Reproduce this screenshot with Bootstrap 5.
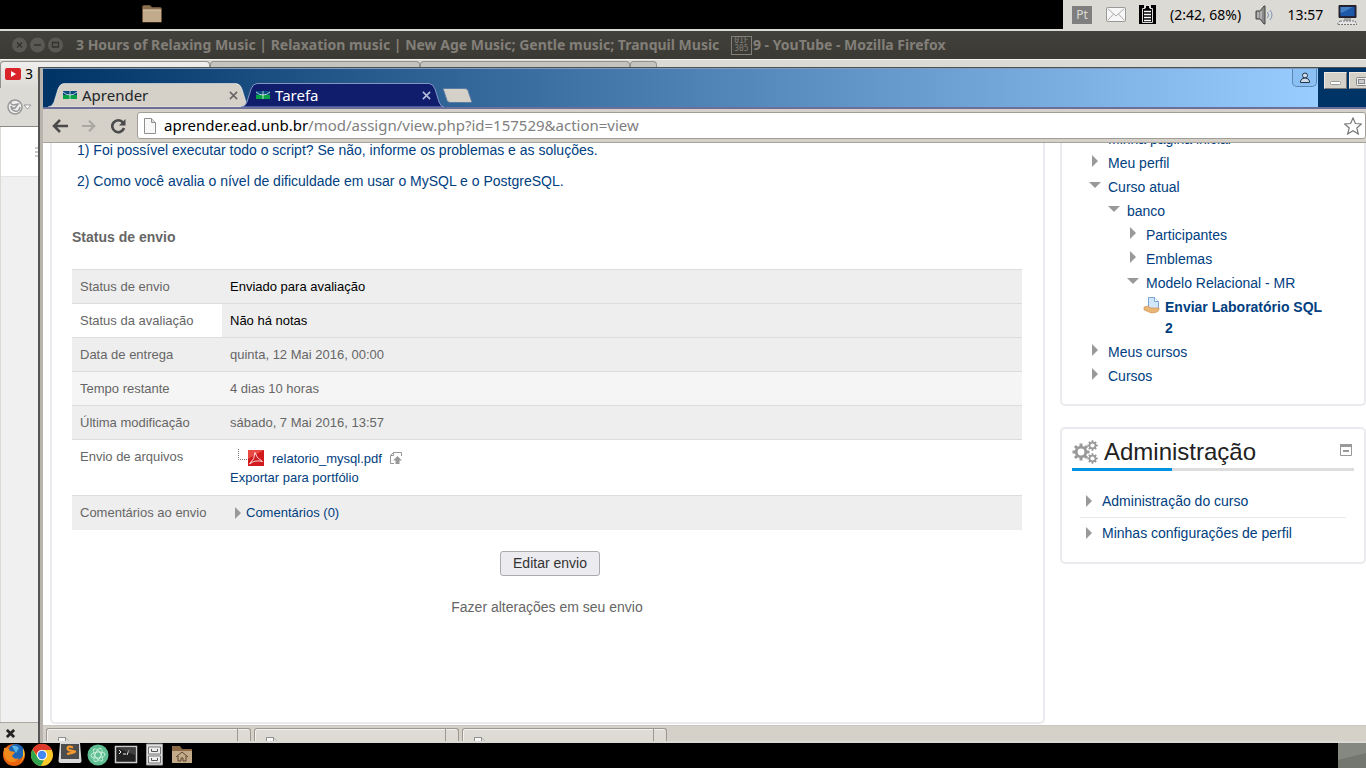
<!DOCTYPE html>
<html lang="pt-BR">
<head>
<meta charset="utf-8">
<meta name="viewport" content="width=device-width, initial-scale=1">
<title>Tarefa</title>
<link href="https://cdn.jsdelivr.net/npm/bootstrap@5.3.0/dist/css/bootstrap.min.css" rel="stylesheet">
<style>
:root{--ui:"Noto Sans","Open Sans",sans-serif;--web:"Liberation Sans",Arial,sans-serif;--edge:#eaeaef;--lnk:#004080}
body{font-family:var(--ui);font-size:14px;line-height:21px;color:#000;background:#000}
svg{display:block;flex:none}
a{text-decoration:none;color:var(--lnk)}
.desktop{height:100vh;overflow:hidden}
/* panel */
.panel-top{height:31px;border-bottom:2px solid #dcdad5}
.folder{margin-left:142px}
.tray{width:303px;background:#dcdad5;padding:0 9px;font-size:14px}
.kbd-lang{width:20px;height:18px;background:#7f7f7f;color:#dcdad5;font-size:12px}
/* firefox */
.ff-title{height:28px;background:linear-gradient(#42413c,#3a3934);color:#827f78;padding-left:12px}
.ff-title h1{font-size:14px;font-weight:700;line-height:28px;margin:0 0 0 13px;white-space:pre}
.codebox{flex:none;width:21px;height:19px;margin:0 1px 0 8px;border:1px solid #827f78;font:8px/8px "DejaVu Sans Mono",monospace;text-align:center;white-space:normal}
.work{background:#dcdad5}
.ff-tabs{height:29px;padding:1px 0 0 0;border-top:1px solid #f4f3f1}
.ff-tab{width:210px;border:1px solid #94928d;border-bottom:0;border-radius:4px 4px 0 0;background:#c6c4bf}
.ff-tab.on{background:linear-gradient(#f0efed,#dcdad5);padding:0 0 3px 4px;white-space:nowrap;overflow:hidden}
.ff-tab.end{width:27px}
.ff-nav{height:39px;padding-left:6px;border-bottom:1px solid #8b8984}
.ff-page{background:#f0f0f0;border-left:1px solid #dcdad5}
.ff-head{height:50px;background:#fff;border-bottom:1px solid #e4e4e4;width:38px}
.ff-find{height:21px;border-top:1px solid #a9a7a2;padding-left:6px}
/* chrome */
.chrome-win{inset:8px 0 0 38px;border-left:2px solid #555;background:#d5d0c8;border-top:1px solid #4c5156;z-index:2}
.chrome-in{border-left:3px solid #b8b4ad}
.c-strip{height:41px;background:#036;border-bottom:2px solid #6c6f9c}
.c-title{border-top:1px solid #7e9cba;background:linear-gradient(90deg,#036 0,#036 4px,#9cf 100%);padding-left:5px}
.c-tab{position:relative;z-index:1;width:203px;height:24px;margin-right:-10px;font-size:15px;line-height:24px;padding:0 13px 0 15px;gap:5px}
.c-tab .shape{position:absolute;inset:0;z-index:-1}
.c-tab button,.plain{border:0;background:none;padding:0;color:inherit}
.c-ctl{width:48px;padding:0 0 0 6px;gap:2px;overflow:hidden}
.c-ctl button{width:23px;height:17px;background:#d5d0c8;border:1px solid #eee9e0;border-right-color:#777;border-bottom-color:#777;padding:0}
.c-user{width:25px;height:18px;border:1px solid #5987b5;border-top:0;border-radius:0 0 5px 5px;background:#8bc0f5;padding:0;margin-right:1px}
.c-bar{height:34px;background:#d5d0c8;border-bottom:1px solid #a6a39d;padding-left:9px}
.c-bar button+button{margin-left:14px}
.omni{height:27px;background:#fff;border:1px solid #a19e98;border-radius:3px;padding:0 3px 0 6px;margin-left:11px}
.url{font-size:15px;color:#808080;white-space:nowrap;cursor:text}
.url span{color:#000}
.view{background:#fff;overflow:hidden;padding-left:7px;font-family:var(--web);gap:15px}
.main-box{border:2px solid var(--edge);border-top:0;border-radius:0 0 5px 5px;padding:0 21px 0 20px;color:#666;margin-bottom:1px}
.lead-lines{margin:-3px 0 0 5px}
.lead-lines p{color:var(--lnk);margin:0 0 10px}
.main-box h2{font-size:14px;line-height:21px;font-weight:700;margin:35px 0 21px}
.status{--bs-table-bg:transparent;font-size:13px;line-height:17px;color:#666;margin:0 0 21px}
.status>tbody>tr>*{padding:8px;border:0;border-top:1px solid #ddd;background:#eee;color:#666;font-weight:400}
.status th{width:150px}
.status .graded td{color:#000}
.status .ungraded th{background:#fff}
.status .pale>*{background:#f5f5f5}
.status .clear>*{background:#fff}
.status .files div{height:20px}
.status .files p{line-height:19px;margin:0}
.status .talk{line-height:18px}
.edit{width:100px;height:25px;font-size:14px;line-height:21px;color:#333;background:#ebebf0;border:1px solid #aaaaaf;border-radius:3px;padding:0;margin:0 0 21px 6px}
.side{width:306px;color:var(--lnk)}
.block{border:2px solid var(--edge);border-radius:5px}
.nav-block{border-top:0;border-radius:0 0 5px 5px;padding:0 32px 16px 28px}
.tree,.tree ul{list-style:none;margin:0;padding:0}
.tree{margin-top:-16px}
.tree ul{padding-left:19px}
.tree .node{gap:8px;padding:2px 0 1px}
.tree .ico{width:10px;flex:none;margin-top:1px}
.admin{margin-top:21px;padding:6px 10px 13px}
.admin .head{gap:6px}
.admin h2{font-size:24px;line-height:33px;font-weight:400;color:#222;margin:0}
.rule{height:3px;background:#ddd;margin-bottom:15px}
.rule i{display:block;height:3px;width:100px;background:#0094e0}
.admin ul{list-style:none;margin:0 8px 0 8px;padding:0}
.admin li{height:31px;padding:5px 0 0 5px;gap:9px}
.admin li svg{margin-top:3px}
.admin li+li{height:32px;border-top:1px solid #e8e8ea}
.dl{height:18px;border-top:1px solid #c9c6c0;border-bottom:2px solid #dcdad5;padding:2px 0 0 3px;gap:3px;overflow:hidden}
.dl-item{width:205px;border:1px solid #9b9892;border-bottom:0;border-radius:3px 3px 0 0;background:#dedbd5;box-shadow:inset 1px 1px #f3f1ed;padding-left:11px;height:24px}
.dl-item i{margin-left:auto;width:13px;border-left:1px solid #9b9892}
.dock{height:25px;gap:4px;padding-left:2px}
.dock svg{width:24px;height:24px}
.dock .wall{width:28px;height:25px}
</style>
</head>
<body>
<svg width="0" height="0" class="position-absolute">
 <defs>
  <symbol id="r" viewBox="0 0 10 14"><path d="M2 1l6 6-6 6z" fill="#999"/></symbol>
  <symbol id="d" viewBox="0 0 12 14"><path d="M0 4h12L6 10z" fill="#999"/></symbol>
  <symbol id="flag" viewBox="0 0 14 8"><path d="M0 0h14v4H0z" fill="#0b4a80"/><path d="M0 4h14v4H0z" fill="#08a045"/><path d="M0 1q3 3 7 3t7-3M7 0v8" fill="none" stroke="#fff" stroke-width=".7"/></symbol>
  <symbol id="x" viewBox="0 0 10 10"><path d="M1 1l8 8M9 1L1 9" stroke="currentColor" stroke-width="1.700"/></symbol>
  <symbol id="gear" viewBox="0 0 18 18"><path d="M9 .5v17M.5 9h17M3 3l12 12M15 3L3 15" stroke="#999" stroke-width="3"/><circle cx="9" cy="9" r="6.200" fill="#999"/><circle cx="9" cy="9" r="3.400" fill="#fff"/></symbol>
  <symbol id="page" viewBox="0 0 12 16"><path d="M.5.5h7l4 4v11H.5z" fill="#f8f8f8" stroke="#8f8f8f"/><path d="M7.500.5v4h4" fill="#ddd" stroke="#8f8f8f"/></symbol>
 </defs>
</svg>
<div class="desktop d-flex flex-column">
 <header class="panel-top d-flex justify-content-between flex-shrink-0">
  <svg class="folder" width="20" height="28" viewBox="0 0 20 28"><path d="M.5 7q0-1.500 1.500-1.500h6l2 2h8q1.500 0 1.500 1.500v13H.5z" fill="#8c6f4e" stroke="#6d5336"/><path d="M1 10h18v12H1z" fill="#c2ab8c"/><path d="M1 10h18" stroke="#e0d0b8"/></svg>
  <div class="tray d-flex align-items-center">
   <span class="kbd-lang d-flex align-items-center justify-content-center">Pt</span>
   <svg class="ms-auto" width="20" height="15" viewBox="0 0 20 15"><rect x=".5" y=".5" width="19" height="14" rx="1" fill="#f7f7f7" stroke="#999"/><path d="M1.500 1.500L10 9l8.500-7.500M1.500 13.500L7.500 7M18.500 13.500L12.500 7" fill="none" stroke="#aaa"/></svg>
   <svg class="ms-auto" width="17" height="19" viewBox="0 0 17 19"><path d="M0 0h17v19H0z"/><path d="M5 .5h1v3H3.500v14h10v-14H11v-3h1" fill="none" stroke="#dcdad5"/><path d="M5 0h7v3H5z" fill="#dcdad5"/><path d="M7 1h3v3H7z"/><path d="M5 6.500h7M5 9.500h7M5 12.500h7M5 15.500h7" stroke="#fff" stroke-width="1.600"/></svg>
   <span class="ms-auto">(2:42, 68%)</span>
   <svg class="ms-auto" width="19" height="20" viewBox="0 0 19 20"><path d="M1 6h4l4-5h1v18H9l-4-5H1z" fill="#888" stroke="#444"/><path d="M3 7v6M6 6v8" stroke="#ddd"/><path d="M12.500 7q2 3 0 6M15 5q4 5 0 10" fill="none" stroke="#7a94b8"/></svg>
   <span class="ms-auto">13:57</span>
   <svg class="ms-auto" width="20" height="20" viewBox="0 0 20 20"><path d="M2 .5h17v12H2z" fill="#224" stroke="#222"/><path d="M3.500 2h14v9h-14z" fill="#1c57a8"/><path d="M3.500 2h12l-9 5-3 1z" fill="#477fc4"/><path d="M7 13h7v3H7z" fill="#aaa"/><path d="M3 16h15l2 3.500H0z" fill="#e5e5e5" stroke="#777" stroke-dasharray="2 1"/></svg>
  </div>
 </header>
 <div class="ff-title d-flex align-items-center flex-shrink-0">
  <svg width="51" height="16" viewBox="0 0 51 16"><g fill="#5b5954"><circle cx="7.500" cy="8" r="7.500"/><circle cx="25.500" cy="8" r="7.500"/><circle cx="43.500" cy="8" r="7.500"/></g><path d="M5 5.500l5 5M10 5.500l-5 5M22 8h7M40.500 5.500h6v4.500h-6z" fill="none" stroke="#33322e" stroke-width="1.300"/></svg>
  <h1 class="d-flex align-items-center">3 Hours of Relaxing Music | Relaxation music | New Age Music; Gentle music; Tranquil Music <span class="codebox">01F 305</span>9 - YouTube - Mozilla Firefox</h1>
 </div>
 <div class="work flex-grow-1 position-relative d-flex flex-column">
  <div class="ff-tabs d-flex flex-shrink-0">
   <div class="ff-tab on d-flex align-items-center"><svg class="me-1" width="16" height="12" viewBox="0 0 16 12"><rect width="16" height="12" rx="2" fill="#d9252a"/><path d="M6 3l5 3-5 3z" fill="#fff"/></svg>3 Hours</div>
   <div class="ff-tab"></div><div class="ff-tab"></div><div class="ff-tab end"></div>
  </div>
  <div class="ff-nav d-flex align-items-center flex-shrink-0">
   <svg width="28" height="18" viewBox="0 0 28 18"><circle cx="9" cy="9" r="7" fill="#eee" stroke="#999" stroke-width="1.500"/><path d="M5 3q-1 3 2 4l5-1-3 4q-3 1-4-2 0 4 4 5t5-4" fill="none" stroke="#999" stroke-width="1.500"/><path d="M18 7h7l-3.500 4z" fill="#fff" stroke="#999"/></svg>
  </div>
  <div class="ff-page flex-grow-1"><div class="ff-head d-flex align-items-center justify-content-end"><svg width="4" height="12" viewBox="0 0 4 12"><path d="M0 2h4M0 6h4M0 10h4" stroke="#999"/></svg></div></div>
  <div class="ff-find d-flex align-items-center flex-shrink-0"><button class="plain" aria-label="Fechar"><svg width="9" height="9" viewBox="0 0 10 10"><path d="M1 1l8 8M9 1L1 9" stroke="#222" stroke-width="3"/></svg></button></div>

  <div class="chrome-win position-absolute d-flex">
   <div class="chrome-in d-flex flex-column flex-grow-1">
    <div class="c-strip d-flex flex-shrink-0">
     <div class="c-title d-flex flex-grow-1 align-items-end" role="tablist">
      <div class="c-tab d-flex align-items-center text-dark">
       <svg class="shape" width="203" height="24" viewBox="0 0 203 24"><path d="M0 24q4 0 6-5l4-13q2-5.500 6-5.500h172q4 0 6 5.500l4 13q2 5 5 5z" fill="#d5d0c8" stroke="#fff" stroke-opacity=".5"/></svg>
       <svg width="14" height="8"><use href="#flag"/></svg><span>Aprender</span>
       <button class="ms-auto" aria-label="Fechar aba"><svg width="9" height="9" color="#666"><use href="#x"/></svg></button>
      </div>
      <div class="c-tab d-flex align-items-center text-white">
       <svg class="shape" width="203" height="24" viewBox="0 0 203 24"><path d="M0 24q4 0 6-5l4-13q2-5.500 6-5.500h172q4 0 6 5.500l4 13q2 5 5 5z" fill="#101c6c" stroke="#8296c6"/></svg>
       <svg width="14" height="8"><use href="#flag"/></svg><span>Tarefa</span>
       <button class="ms-auto" aria-label="Fechar aba"><svg width="9" height="9" color="#b9c0dd"><use href="#x"/></svg></button>
      </div>
      <button class="plain ms-2 mb-1" aria-label="Nova aba"><svg width="31" height="15" viewBox="0 0 31 15"><path d="M1 .5h22q2 0 3 2l4 12H8q-2 0-3-2z" fill="#d5d0c8" stroke="#5a7ba4"/></svg></button>
      <button class="c-user ms-auto align-self-start d-flex align-items-center justify-content-center" aria-label="Usuário"><svg width="10" height="11" viewBox="0 0 10 11"><circle cx="5" cy="3.500" r="2.500" fill="#cde" stroke="#234"/><path d="M.5 10.500V9q1-3 4.500-3t4.500 3v1.500z" fill="#cde" stroke="#234"/></svg></button>
     </div>
     <div class="c-ctl d-flex"><button class="flex-shrink-0 mt-1" aria-label="Minimizar"><svg width="21" height="15"><rect x="5.500" y="8.500" width="10" height="3" rx="1" fill="#fff" stroke="#999"/></svg></button><button class="flex-shrink-0 mt-1" aria-label="Maximizar"><svg width="21" height="15"><rect x="6.500" y="4.500" width="10" height="8" rx="1" fill="#eee" stroke="#888"/><rect x="8.500" y="6.500" width="6" height="4" fill="#ccc" stroke="#888"/></svg></button></div>
    </div>
    <div class="c-bar d-flex align-items-center flex-shrink-0">
     <button class="plain" aria-label="Voltar"><svg width="16" height="14" viewBox="0 0 16 14"><path d="M8 1L2 7l6 6M2 7h14" fill="none" stroke="#4a4a4a" stroke-width="2.500"/></svg></button>
     <button class="plain" aria-label="Avançar"><svg width="14" height="14" viewBox="0 0 16 14"><path d="M8 1l6 6-6 6M14 7H0" fill="none" stroke="#aaa8a3" stroke-width="2.500"/></svg></button>
     <button class="plain" aria-label="Recarregar"><svg width="16" height="16" viewBox="0 0 16 16"><path d="M13 4.500A6 6 0 1 0 14 10" fill="none" stroke="#4a4a4a" stroke-width="2.600"/><path d="M15.500 1v6.500H9z" fill="#4a4a4a"/></svg></button>
     <div class="omni d-flex align-items-center flex-grow-1">
      <svg width="12" height="16" class="me-2"><use href="#page"/></svg>
      <div class="url flex-grow-1" role="textbox" aria-label="Endereço"><span>aprender.ead.unb.br</span>/mod/assign/view.php?id=157529&amp;action=view</div>
      <svg width="18" height="18" viewBox="0 0 18 18"><path d="M9 1l2.400 5.500 6 .5-4.600 4 1.500 6L9 13.800 3.700 17l1.500-6L.6 7l6-.5z" fill="#fff" stroke="#777" stroke-width="1.200"/></svg>
     </div>
    </div>
    <div class="view d-flex flex-grow-1">
     <main class="main-box flex-grow-1">
      <div class="lead-lines"><p>1) Foi possível executar todo o script? Se não, informe os problemas e as soluções.</p><p>2) Como você avalia o nível de dificuldade em usar o MySQL e o PostgreSQL.</p></div>
      <h2>Status de envio</h2>
      <table class="table status">
       <tbody>
       <tr class="graded"><th scope="row">Status de envio</th><td>Enviado para avaliação</td></tr>
       <tr class="graded ungraded"><th scope="row">Status da avaliação</th><td>Não há notas</td></tr>
       <tr><th scope="row">Data de entrega</th><td>quinta, 12 Mai 2016, 00:00</td></tr>
       <tr class="pale"><th scope="row">Tempo restante</th><td>4 dias 10 horas</td></tr>
       <tr><th scope="row">Última modificação</th><td>sábado, 7 Mai 2016, 13:57</td></tr>
       <tr class="clear"><th scope="row">Envio de arquivos</th><td class="files"><div class="d-flex align-items-center">
        <svg class="ms-2" width="10" height="18" viewBox="0 0 10 18"><path d="M.5 0v10.500H10" fill="none" stroke="#777" stroke-dasharray="1 1"/></svg>
        <svg width="16" height="16" viewBox="0 0 16 16"><path d="M0 0h16v16H0z" fill="#d01a1e"/><path d="M0 0h16L0 9z" fill="#ea4a44"/><path d="M7 2.500Q8 8 14.500 11.500 7 9.500 1.500 14 7 9 7 2.500z" fill="none" stroke="#fff" stroke-width=".8"/></svg>
        <a href="#" class="ms-2 me-2">relatorio_mysql.pdf</a>
        <svg width="12" height="12" viewBox="0 0 12 12"><path d="M4 11.500H.5v-8l3-3h8V4M.5 3.500h3v-3" fill="none" stroke="#999"/><path d="M7.500 4L12 8.500H9.500V12h-4V8.500H3z" fill="#999"/></svg></div>
        <p><a href="#">Exportar para portfólio</a></p></td></tr>
       <tr><th scope="row">Comentários ao envio</th><td><a href="#" class="talk d-flex align-items-center"><svg class="ms-1 me-1" width="8" height="14" viewBox="1 0 8 14"><use href="#r" width="10" height="14"/></svg>Comentários (0)</a></td></tr>
       </tbody>
      </table>
      <div class="d-flex flex-column align-items-center"><button class="edit">Editar envio</button><div>Fazer alterações em seu envio</div></div>
     </main>
     <aside class="side flex-shrink-0">
      <nav class="block nav-block">
       <ul class="tree">
        <li><div class="node d-flex"><span class="ico"></span><a href="#">Minha página inicial</a></div></li>
        <li><div class="node d-flex"><svg class="ico" height="14"><use href="#r" width="10" height="14"/></svg><a href="#">Meu perfil</a></div></li>
        <li><div class="node d-flex"><svg class="ico overflow-visible" height="14" viewBox="1 0 10 14"><use href="#d" width="12" height="14"/></svg><a href="#">Curso atual</a></div>
         <ul>
          <li><div class="node d-flex"><svg class="ico overflow-visible" height="14" viewBox="1 0 10 14"><use href="#d" width="12" height="14"/></svg><a href="#">banco</a></div>
           <ul>
            <li><div class="node d-flex"><svg class="ico" height="14"><use href="#r" width="10" height="14"/></svg><a href="#">Participantes</a></div></li>
            <li><div class="node d-flex"><svg class="ico" height="14"><use href="#r" width="10" height="14"/></svg><a href="#">Emblemas</a></div></li>
            <li><div class="node d-flex"><svg class="ico overflow-visible" height="14" viewBox="1 0 10 14"><use href="#d" width="12" height="14"/></svg><a href="#">Modelo Relacional - MR</a></div>
             <ul><li><div class="node d-flex"><svg class="ico overflow-visible" height="16" viewBox="3 1 10 16"><path d="M4.500.5h6l4 4V12H4.500z" fill="#d3e7fb" stroke="#7aa6d8"/><path d="M10.500.5v4h4" fill="#fff" stroke="#7aa6d8"/><path d="M0 10q4-2 7 1h8q1 2-2 4-6 2-8 0L0 13z" fill="#eab676" stroke="#c98b4d" stroke-width=".6"/></svg><a href="#" class="fw-bold">Enviar Laboratório SQL 2</a></div></li></ul>
            </li>
           </ul>
          </li>
         </ul>
        </li>
        <li><div class="node d-flex"><svg class="ico" height="14"><use href="#r" width="10" height="14"/></svg><a href="#">Meus cursos</a></div></li>
        <li><div class="node d-flex"><svg class="ico" height="14"><use href="#r" width="10" height="14"/></svg><a href="#">Cursos</a></div></li>
       </ul>
      </nav>
      <section class="block admin">
       <div class="head d-flex align-items-center">
        <svg width="26" height="26" viewBox="0 0 26 26"><use href="#gear" x="0" y="4" width="18" height="18"/><use href="#gear" x="15" y="1" width="11" height="11"/><use href="#gear" x="15" y="14" width="11" height="11"/></svg>
        <h2>Administração</h2>
        <button class="plain ms-auto mb-1" aria-label="Ocultar bloco"><svg width="14" height="12" viewBox="0 0 14 12"><path d="M.5.5h11v11H.5z" fill="none" stroke="#999"/><path d="M0 1.500h12" stroke="#999" stroke-width="3"/><path d="M3 7h6" stroke="#999" stroke-width="2"/></svg></button>
       </div>
       <div class="rule"><i></i></div>
       <ul>
        <li class="d-flex"><svg width="8" height="14" viewBox="1 0 8 14"><use href="#r" width="10" height="14"/></svg><a href="#">Administração do curso</a></li>
        <li class="d-flex"><svg width="8" height="14" viewBox="1 0 8 14"><use href="#r" width="10" height="14"/></svg><a href="#">Minhas configurações de perfil</a></li>
       </ul>
      </section>
     </aside>
    </div>
    <div class="dl d-flex flex-shrink-0">
     <div class="dl-item d-flex"><svg width="12" height="16" class="mt-2"><use href="#page"/></svg><i></i></div>
     <div class="dl-item d-flex"><svg width="12" height="16" class="mt-2"><use href="#page"/></svg><i></i></div>
     <div class="dl-item d-flex"><svg width="12" height="16" class="mt-2"><use href="#page"/></svg><i></i></div>
    </div>
   </div>
  </div>
 </div>
 <footer class="dock d-flex flex-shrink-0">
  <svg viewBox="0 0 24 24"><circle cx="12" cy="12" r="11" fill="#e8630c"/><circle cx="14" cy="9" r="8" fill="#1e66b5"/><path d="M10 3q4-1 7 2l-3 5z" fill="#57b4e5"/><path d="M2 5q4-1 6 3l5 1-3 4q2 4 7 2-3 5-9 4Q0 15 2 5z" fill="#f08a1c"/><path d="M21 5q3 6 0 11t-9 7q8-3 9-9z" fill="#fbc62c"/></svg>
  <svg viewBox="0 0 24 24"><circle cx="12" cy="12" r="11" fill="#fcc92a"/><path d="M2.500 6.500A11 11 0 0 1 22 7H12q-4 0-5 5z" fill="#dd3a2c"/><path d="M2.500 6.500L8 15q2 3 6 2l-3 6A11 11 0 0 1 2.500 6.500z" fill="#30a350"/><circle cx="12" cy="12" r="5.200" fill="#fff"/><circle cx="12" cy="12" r="4.200" fill="#4587f0"/></svg>
  <svg viewBox="0 0 24 24"><path d="M2 0h20l1.500 18q0 2-2 2h-19q-2 0-2-2z" fill="#d8d8d8"/><path d="M3 1h18v15H3z" fill="#4d4d4d"/><path d="M15 4.500q-5-2-5.500.5t5.500 3-6 3" fill="none" stroke="#f79a2c" stroke-width="2.200"/></svg>
  <svg viewBox="0 0 24 24"><circle cx="12" cy="12" r="10.500" fill="#5fbf92"/><g fill="none" stroke="#c9f0dc"><ellipse cx="12" cy="12" rx="3" ry="7" transform="rotate(25 12 12)"/><ellipse cx="12" cy="12" rx="3" ry="7" transform="rotate(85 12 12)"/><ellipse cx="12" cy="12" rx="3" ry="7" transform="rotate(145 12 12)"/></g></svg>
  <svg viewBox="0 0 24 24"><path d="M1.500 3.500h21v16h-21z" fill="#222" stroke="#ccc" stroke-width="1.500"/><path d="M5 7l2 2-2 2M9 11h3M15 7l-2 5" fill="none" stroke="#eee"/><path d="M3 5h18v7z" fill="#555" opacity=".6"/></svg>
  <svg viewBox="0 0 24 24"><path d="M4.500 1h16v21h-16z" fill="#ddd" stroke="#999"/><path d="M6.500 4h12v7h-12zM6.500 13h12v7h-12z" fill="#eee" stroke="#777"/><path d="M9.500 6v2.500h6V6M9.500 15v2.500h6V15" fill="none" stroke="#555"/></svg>
  <svg viewBox="0 0 24 24"><path d="M2 3h8l2 3h10v14H2z" fill="#8b6a45"/><path d="M2 8h20v12H2z" fill="#c3ab8a"/><path d="M6 14l6-5 6 5M8 13v5h3v-3h2v3h3v-5" fill="none" stroke="#5b4630"/></svg>
  <svg class="wall ms-auto" viewBox="0 0 28 25"><path d="M0 0h28v25H0z" fill="#858781"/><path d="M0 17L28 10v15H0z" fill="#747670"/></svg>
 </footer>
</div>
<script src="https://cdn.jsdelivr.net/npm/bootstrap@5.3.0/dist/js/bootstrap.bundle.min.js"></script>
</body>
</html>
